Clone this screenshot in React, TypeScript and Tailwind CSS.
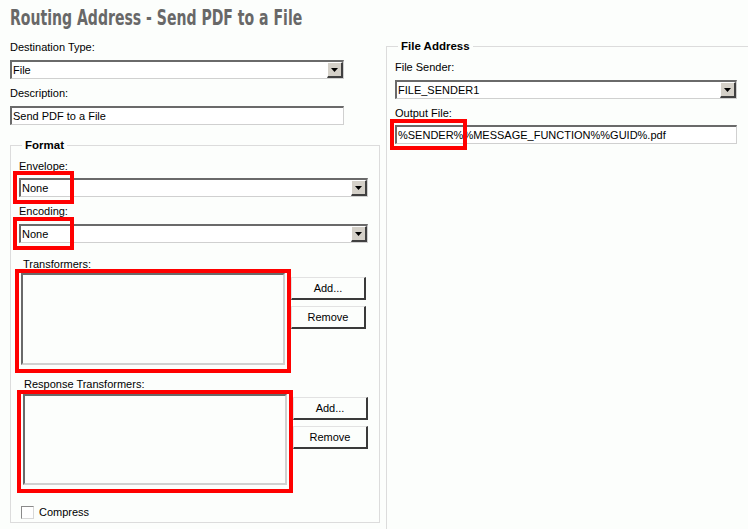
import React from "react";

const FONT = { fontFamily: '"Liberation Sans", Arial, sans-serif' };

function Arrow() {
  return (
    <div className="w-[16px] h-full bg-[#d4d0c8] border-t border-l border-t-white border-l-white border-b-2 border-r-2 border-b-[#404040] border-r-[#404040] flex items-center justify-center">
      <svg width="7" height="4" viewBox="0 0 7 4">
        <polygon points="0,0 7,0 3.5,4" fill="#000" />
      </svg>
    </div>
  );
}

function Select({ value, w }: { value: string; w: string }) {
  return (
    <div className={`${w} h-[19px] flex border-t-2 border-l-2 border-t-[#6a6a6a] border-l-[#6a6a6a] border-b border-r border-b-[#d0d0d0] border-r-[#d0d0d0] bg-white`}>
      <div className="flex-1 pl-[1px] text-[11px] leading-[16px] text-black">{value}</div>
      <div className="h-full">
        <Arrow />
      </div>
    </div>
  );
}

function Input({ value, w }: { value: string; w: string }) {
  return (
    <div className={`${w} h-[19px] border-t-2 border-l-2 border-t-[#6a6a6a] border-l-[#6a6a6a] border-b border-r border-b-[#d0d0d0] border-r-[#d0d0d0] bg-white pl-[1px] text-[11px] leading-[16px] text-black`}>
      {value}
    </div>
  );
}

function Label({ children, cls = "" }: { children: React.ReactNode; cls?: string }) {
  return <div className={`text-[11px] leading-[15px] h-[13px] text-black ${cls}`}>{children}</div>;
}

function Btn({ children }: { children: React.ReactNode }) {
  return (
    <div className="w-[75px] h-[23px] border-t border-l border-t-[#e2e2e2] border-l-[#e2e2e2] border-b-2 border-r-2 border-b-[#3a3a3a] border-r-[#3a3a3a] flex items-center justify-center text-[11px] text-black">
      {children}
    </div>
  );
}

function ListBox({ h }: { h: string }) {
  return (
    <div className={`w-[264px] ${h} border-t-2 border-l-2 border-t-[#6a6a6a] border-l-[#6a6a6a] border-b-2 border-r-2 border-b-[#d0d0d0] border-r-[#d0d0d0] bg-[#fcfefc]`} />
  );
}

function RedBox({ cls }: { cls: string }) {
  return <div className={`absolute border-4 border-[#ff0000] pointer-events-none ${cls}`} />;
}

export default function App() {
  return (
    <div className="relative w-[748px] h-[529px] overflow-hidden bg-[#fcfefc]" style={FONT}>
      <div className="pl-[10px] pt-[5px] h-[31px]">
        <div
          className="inline-block origin-left scale-x-[0.71] whitespace-nowrap text-[22px] leading-[26px] font-bold text-[#686868]"
          style={{ fontFamily: '"Liberation Sans Narrow", "DejaVu Sans Condensed", "Arial Narrow", sans-serif' }}
        >
          Routing Address - Send PDF to a File
        </div>
      </div>
      <div className="flex">
        {/* Left column */}
        <div className="pl-[10px] w-[380px] flex flex-col">
          <Label cls="mt-[9px]">Destination Type:</Label>
          <div className="mt-[7px]">
            <Select value="File" w="w-[334px]" />
          </div>
          <Label cls="mt-[7px]">Description:</Label>
          <div className="mt-[7px]">
            <Input value="Send PDF to a File" w="w-[334px]" />
          </div>
          <fieldset className="mt-[13px] w-[370px] border border-[#dcdcdc] pl-[8px] pb-[3px]">
            <legend className="ml-[3px] px-[3px] text-[11.5px] leading-[14px] font-bold text-black">Format</legend>
            <Label cls="mt-[7px]">Envelope:</Label>
            <div className="mt-[6px]">
              <Select value="None" w="w-[349px]" />
            </div>
            <Label cls="mt-[7px]">Encoding:</Label>
            <div className="mt-[7px]">
              <Select value="None" w="w-[349px]" />
            </div>
            <Label cls="mt-[14px] ml-[4px]">Transformers:</Label>
            <div className="mt-[3px] ml-[2px] flex gap-[6px]">
              <ListBox h="h-[92px]" />
              <div className="mt-[4px] flex flex-col gap-[6px]">
                <Btn>Add...</Btn>
                <Btn>Remove</Btn>
              </div>
            </div>
            <Label cls="mt-[12px] ml-[5px]">Response Transformers:</Label>
            <div className="mt-[4px] ml-[4px] flex gap-[6px]">
              <ListBox h="h-[91px]" />
              <div className="mt-[3px] flex flex-col gap-[6px]">
                <Btn>Add...</Btn>
                <Btn>Remove</Btn>
              </div>
            </div>
            <div className="mt-[21px] ml-[2px] flex items-center gap-[5px]">
              <div className="w-[13px] h-[13px] border border-t-[#8a8a8a] border-l-[#8a8a8a] border-b-[#d8d8d8] border-r-[#d8d8d8] bg-white" />
              <span className="text-[11px] leading-[13px] text-black">Compress</span>
            </div>
          </fieldset>
        </div>
        {/* Right column */}
        <div className="ml-[6px]">
          <fieldset className="mt-[8px] w-[400px] h-[600px] border border-[#dcdcdc] pl-[8px]">
            <legend className="ml-[3px] px-[3px] text-[11.5px] leading-[14px] font-bold text-black">File Address</legend>
            <Label cls="mt-[7px]">File Sender:</Label>
            <div className="mt-[7px]">
              <Select value="FILE_SENDER1" w="w-[342px]" />
            </div>
            <Label cls="mt-[7px]">Output File:</Label>
            <div className="mt-[6px]">
              <Input value="%SENDER%%MESSAGE_FUNCTION%%GUID%.pdf" w="w-[342px]" />
            </div>
          </fieldset>
        </div>
      </div>

      <RedBox cls="left-[13px] top-[171px] w-[61px] h-[33px]" />
      <RedBox cls="left-[13px] top-[217px] w-[61px] h-[33px]" />
      <RedBox cls="left-[15px] top-[269px] w-[276px] h-[104px]" />
      <RedBox cls="left-[17px] top-[390px] w-[276px] h-[103px]" />
      <RedBox cls="left-[390px] top-[119px] w-[77px] h-[31px]" />
    </div>
  );
}
